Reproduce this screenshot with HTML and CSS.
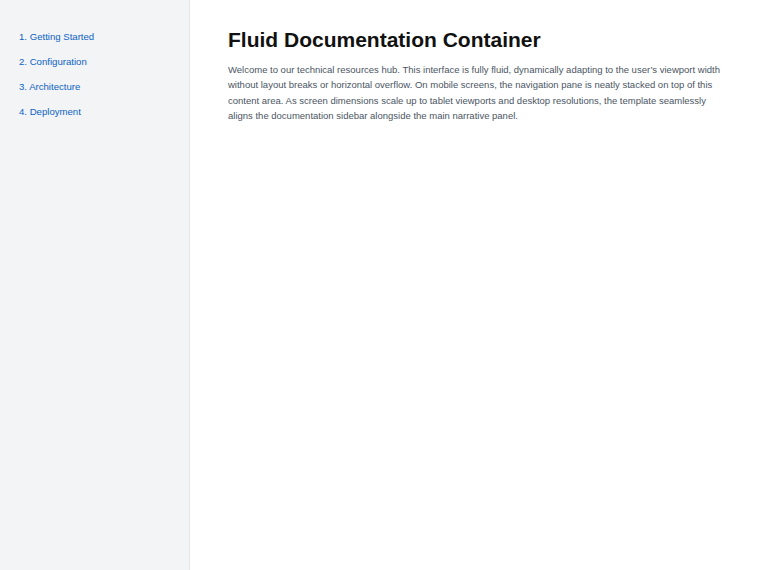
FILE: index.html
```html
<!DOCTYPE html>
<html lang="en">
<head>
    <meta charset="UTF-8">
    <meta name="viewport" content="width=device-width, initial-scale=1.0">
    <title>Fluid Documentation Container</title>
    <link rel="stylesheet" href="styles.css">
</head>
<body>
    <div class="layout">
        <nav class="sidebar">
            <ul class="nav-list">
                <li><a href="#getting-started">1. Getting Started</a></li>
                <li><a href="#configuration">2. Configuration</a></li>
                <li><a href="#architecture">3. Architecture</a></li>
                <li><a href="#deployment">4. Deployment</a></li>
            </ul>
        </nav>

        <main class="content">
            <h1>Fluid Documentation Container</h1>
            <p>Welcome to our technical resources hub. This interface is fully fluid, dynamically adapting to the user’s viewport width without layout breaks or horizontal overflow. On mobile screens, the navigation pane is neatly stacked on top of this content area. As screen dimensions scale up to tablet viewports and desktop resolutions, the template seamlessly aligns the documentation sidebar alongside the main narrative panel.</p>
        </main>
    </div>
</body>
</html>
```

FILE: styles.css
```css
* {
    box-sizing: border-box;
}
html, body {
    height: 100%;
}
body {
    font-family: "Liberation Sans", Arial, sans-serif;
    margin: 0;
    background-color: #ffffff;
}
.layout {
    display: flex;
    min-height: 100%;
}
.sidebar {
    width: 25%;
    flex-shrink: 0;
    background-color: #f3f4f6;
    border-right: 1px solid #e5e7eb;
    padding: 29px 19px;
}
.nav-list {
    list-style: none;
    margin: 0;
    padding: 0;
    display: flex;
    flex-direction: column;
    gap: 10px;
}
.nav-list a {
    display: block;
    font-size: 9.6px;
    line-height: 15px;
    color: #0b63c4;
    text-decoration: none;
}
.nav-list a:hover {
    text-decoration: underline;
}
.content {
    flex: 1;
    padding: 27px 36px 27px 38px;
}
.content h1 {
    font-size: 21px;
    font-weight: 700;
    line-height: 1.2;
    color: #111111;
    margin: 0 0 10px;
}
.content p {
    font-size: 9.5px;
    line-height: 15.3px;
    color: #4b5563;
    margin: 0;
}
```
